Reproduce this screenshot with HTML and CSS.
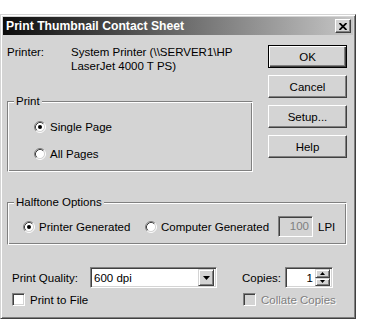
FILE: index.html
```html
<!DOCTYPE html>
<html>
<head>
<meta charset="utf-8">
<link rel="stylesheet" href="styles.css">
</head>
<body>
<div class="dialog">
  <div class="titlebar">
    <span class="title">Print Thumbnail Contact Sheet</span>
    <span class="close"><svg width="8" height="7" viewBox="0 0 8 7"><path d="M0.5 0 L7.5 7 M7.5 0 L0.5 7" stroke="#000" stroke-width="1.8" fill="none"/></svg></span>
  </div>
  <div class="content">
    <div class="top">
      <div class="left">
        <div class="printer">
          <span class="plabel">Printer:</span>
          <span class="pval">System Printer (\\SERVER1\HP<br>LaserJet 4000 T PS)</span>
        </div>
        <div class="group print-group">
          <span class="legend">Print</span>
          <div class="radio r1">
            <svg width="12" height="12" viewBox="0 0 12 12"><circle cx="6" cy="6" r="4.5" fill="#fff"/><path d="M2.11 9.89 A5.5 5.5 0 0 1 9.89 2.11" stroke="#808080" fill="none"/><path d="M9.89 2.11 A5.5 5.5 0 0 1 2.11 9.89" stroke="#fff" fill="none"/><path d="M2.82 9.18 A4.5 4.5 0 0 1 9.18 2.82" stroke="#404040" fill="none"/><path d="M9.18 2.82 A4.5 4.5 0 0 1 2.82 9.18" stroke="#d4d4d4" fill="none"/><circle cx="6" cy="6" r="2" fill="#000"/></svg>
            <span>Single Page</span>
          </div>
          <div class="radio r2">
            <svg width="12" height="12" viewBox="0 0 12 12"><circle cx="6" cy="6" r="4.5" fill="#fff"/><path d="M2.11 9.89 A5.5 5.5 0 0 1 9.89 2.11" stroke="#808080" fill="none"/><path d="M9.89 2.11 A5.5 5.5 0 0 1 2.11 9.89" stroke="#fff" fill="none"/><path d="M2.82 9.18 A4.5 4.5 0 0 1 9.18 2.82" stroke="#404040" fill="none"/><path d="M9.18 2.82 A4.5 4.5 0 0 1 2.82 9.18" stroke="#d4d4d4" fill="none"/></svg>
            <span>All Pages</span>
          </div>
        </div>
      </div>
      <div class="buttons">
        <div class="btn default">OK</div>
        <div class="btn">Cancel</div>
        <div class="btn">Setup...</div>
        <div class="btn">Help</div>
      </div>
    </div>
    <div class="group halftone">
      <span class="legend">Halftone Options</span>
      <div class="ht-row">
        <div class="radio">
          <svg width="12" height="12" viewBox="0 0 12 12"><circle cx="6" cy="6" r="4.5" fill="#fff"/><path d="M2.11 9.89 A5.5 5.5 0 0 1 9.89 2.11" stroke="#808080" fill="none"/><path d="M9.89 2.11 A5.5 5.5 0 0 1 2.11 9.89" stroke="#fff" fill="none"/><path d="M2.82 9.18 A4.5 4.5 0 0 1 9.18 2.82" stroke="#404040" fill="none"/><path d="M9.18 2.82 A4.5 4.5 0 0 1 2.82 9.18" stroke="#d4d4d4" fill="none"/><circle cx="6" cy="6" r="2" fill="#000"/></svg>
          <span>Printer Generated</span>
        </div>
        <div class="radio">
          <svg width="12" height="12" viewBox="0 0 12 12"><circle cx="6" cy="6" r="4.5" fill="#fff"/><path d="M2.11 9.89 A5.5 5.5 0 0 1 9.89 2.11" stroke="#808080" fill="none"/><path d="M9.89 2.11 A5.5 5.5 0 0 1 2.11 9.89" stroke="#fff" fill="none"/><path d="M2.82 9.18 A4.5 4.5 0 0 1 9.18 2.82" stroke="#404040" fill="none"/><path d="M9.18 2.82 A4.5 4.5 0 0 1 2.82 9.18" stroke="#d4d4d4" fill="none"/></svg>
          <span>Computer Generated</span>
        </div>
        <div class="field lpi">100</div>
        <span class="lpi-label">LPI</span>
      </div>
    </div>
    <div class="row1">
      <span class="ql">Print Quality:</span>
      <div class="select">
        <span class="sel-text">600 dpi</span>
        <span class="drop"><svg width="7" height="4" viewBox="0 0 7 4"><path d="M0 0 H7 L3.5 4 Z" fill="#000"/></svg></span>
      </div>
      <span class="cl">Copies:</span>
      <div class="spinner">
        <span class="spin-val">1</span>
        <span class="spin-btns">
          <span class="spin-b"><svg width="5" height="3" viewBox="0 0 5 3"><path d="M0 3 H5 L2.5 0 Z" fill="#000"/></svg></span>
          <span class="spin-b"><svg width="5" height="3" viewBox="0 0 5 3"><path d="M0 0 H5 L2.5 3 Z" fill="#000"/></svg></span>
        </span>
      </div>
    </div>
    <div class="row2">
      <div class="chk-item file"><span class="check"></span><span>Print to File</span></div>
      <div class="chk-item collate"><span class="check disabled"></span><span class="dis-text">Collate Copies</span></div>
    </div>
  </div>
</div>
</body>
</html>
```
FILE: styles.css
```css
body {
  margin: 0;
  background: #fff;
  font-family: "Liberation Sans", Arial, sans-serif;
  font-size: 11.5px;
  color: #000;
  white-space: nowrap;
}
.dialog {
  box-sizing: border-box;
  width: 356px;
  height: 305px;
  margin-top: 14px;
  background: #d4d4d4;
  border: 1px solid;
  border-color: #d4d4d4 #404040 #404040 #d4d4d4;
  box-shadow: inset 1px 1px #fff, inset -1px -1px #808080;
  padding: 2px;
}
.titlebar {
  height: 18px;
  background: linear-gradient(to right, #0c0c0c, #c6c6c6);
  display: flex;
  align-items: center;
  justify-content: space-between;
  padding: 0 2px 0 3px;
}
.title {
  color: #fff;
  font-weight: bold;
  font-size: 12.2px;
}
.close {
  box-sizing: border-box;
  width: 16px;
  height: 14px;
  background: #d4d4d4;
  border: 1px solid;
  border-color: #fff #404040 #404040 #fff;
  box-shadow: inset -1px -1px #808080;
  display: flex;
  align-items: center;
  justify-content: center;
}
.content {
  padding: 10px 6px 0 4px;
}
.top {
  display: flex;
  gap: 15px;
}
.left {
  width: 246px;
}
.printer {
  display: flex;
  line-height: 14px;
  height: 28px;
}
.plabel {
  width: 64px;
}
.group {
  box-sizing: border-box;
  border: 1px solid;
  border-color: #808080 #fff #fff #808080;
  box-shadow: inset 1px 1px #fff, inset -1px -1px #808080;
}
.legend {
  display: block;
  width: fit-content;
  margin: -7px 0 0 6px;
  padding: 0 2px;
  background: #d4d4d4;
  line-height: 13px;
  height: 13px;
}
.print-group {
  margin-top: 28px;
  height: 71px;
}
.radio {
  display: flex;
  align-items: center;
  gap: 4px;
  height: 14px;
}
.print-group .radio {
  margin-left: 26px;
}
.print-group .r1 {
  margin-top: 12px;
}
.print-group .r2 {
  margin-top: 13px;
}
.buttons {
  width: 79px;
  display: flex;
  flex-direction: column;
  gap: 7px;
}
.btn {
  box-sizing: border-box;
  height: 23px;
  display: flex;
  align-items: center;
  justify-content: center;
  background: #d4d4d4;
  border: 1px solid;
  border-color: #fff #404040 #404040 #fff;
  box-shadow: inset -1px -1px #808080;
}
.btn.default {
  border-color: #000;
  box-shadow: inset 1px 1px #fff, inset -1px -1px #404040, inset -2px -2px #808080;
}
.halftone {
  margin-top: 30px;
  height: 43px;
}
.ht-row {
  display: grid;
  grid-template-columns: 122px 133px 35px auto;
  align-items: center;
  height: 21px;
  margin: 7px 0 0 15px;
}
.field {
  box-sizing: border-box;
  border: 1px solid;
  border-color: #808080 #fff #fff #808080;
  box-shadow: inset 1px 1px #404040, inset -1px -1px #d4d4d4;
}
.lpi {
  height: 21px;
  background: #d4d4d4;
  color: #808080;
  text-align: right;
  line-height: 19px;
  padding-right: 3px;
}
.lpi-label {
  margin-left: 5px;
}
.row1 {
  display: flex;
  align-items: center;
  height: 21px;
  margin-top: 22px;
  padding-left: 5px;
}
.ql {
  width: 78px;
}
.select {
  box-sizing: border-box;
  width: 127px;
  height: 21px;
  display: flex;
  align-items: center;
  justify-content: space-between;
  background: #fff;
  padding: 2px;
  border: 1px solid;
  border-color: #808080 #fff #fff #808080;
  box-shadow: inset 1px 1px #404040, inset -1px -1px #d4d4d4;
}
.sel-text {
  padding-left: 1px;
}
.drop, .spin-b {
  box-sizing: border-box;
  display: flex;
  align-items: center;
  justify-content: center;
  background: #d4d4d4;
  border: 1px solid;
  border-color: #d4d4d4 #404040 #404040 #d4d4d4;
  box-shadow: inset 1px 1px #fff, inset -1px -1px #808080;
}
.drop {
  width: 16px;
  height: 17px;
}
.cl {
  margin-left: 25px;
  width: 43px;
}
.spinner {
  box-sizing: border-box;
  width: 48px;
  height: 21px;
  display: flex;
  align-items: center;
  justify-content: flex-end;
  background: #fff;
  padding: 2px;
  border: 1px solid;
  border-color: #808080 #fff #fff #808080;
  box-shadow: inset 1px 1px #404040, inset -1px -1px #d4d4d4;
}
.spin-val {
  margin-right: 2px;
}
.spin-btns {
  display: flex;
  flex-direction: column;
  width: 15px;
  height: 17px;
}
.spin-b {
  flex: 1;
}
.row2 {
  display: flex;
  align-items: center;
  height: 13px;
  margin-top: 5px;
  padding-left: 5px;
}
.chk-item {
  display: flex;
  align-items: center;
  gap: 5px;
}
.file {
  width: 231px;
}
.check {
  box-sizing: border-box;
  width: 13px;
  height: 13px;
  background: #fff;
  border: 1px solid;
  border-color: #808080 #fff #fff #808080;
  box-shadow: inset 1px 1px #404040, inset -1px -1px #d4d4d4;
}
.check.disabled {
  background: #d4d4d4;
}
.dis-text {
  color: #808080;
  text-shadow: 1px 1px #fff;
}
```
